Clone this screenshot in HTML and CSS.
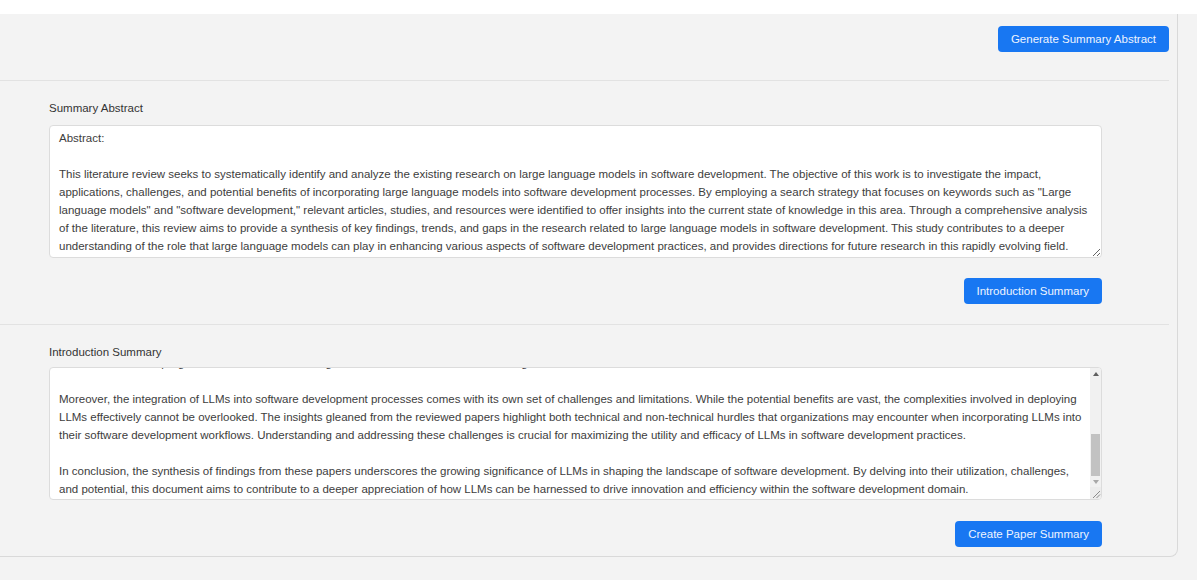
FILE: index.html
```html
<!DOCTYPE html>
<html lang="en">
<head>
<meta charset="utf-8">
<title>Paper Summary</title>
<link rel="stylesheet" href="styles.css">
</head>
<body>
<div class="page">
  <div class="card">
    <div class="card-header">
      <button class="btn" type="button">Generate Summary Abstract</button>
    </div>
    <hr class="sep">
    <div class="section">
      <label class="field-label" for="abstract">Summary Abstract</label>
      <textarea id="abstract" class="field">Abstract:

This literature review seeks to systematically identify and analyze the existing research on large language models in software development. The objective of this work is to investigate the impact, applications, challenges, and potential benefits of incorporating large language models into software development processes. By employing a search strategy that focuses on keywords such as "Large language models" and "software development," relevant articles, studies, and resources were identified to offer insights into the current state of knowledge in this area. Through a comprehensive analysis of the literature, this review aims to provide a synthesis of key findings, trends, and gaps in the research related to large language models in software development. This study contributes to a deeper understanding of the role that large language models can play in enhancing various aspects of software development practices, and provides directions for future research in this rapidly evolving field.</textarea>
      <div class="actions">
        <button class="btn" type="button">Introduction Summary</button>
      </div>
    </div>
    <hr class="sep">
    <div class="section section-last">
      <label class="field-label" for="intro">Introduction Summary</label>
      <div class="field-wrap">
        <textarea id="intro" class="field field-scroll">Introduction:

The rapid advancement of Large Language Models (LLMs) has ushered in a new era of possibilities within the field of software development. This document synthesizes the findings of several research papers that explore the utilization of LLMs across various stages of the software development lifecycle, from requirements engineering and code generation to testing, debugging, and maintenance. By examining these studies collectively, we aim to provide a comprehensive overview of the current state of research and practice, and to identify recurring themes that emerge across the literature.

The reviewed papers highlight a diverse range of applications in which LLMs have demonstrated considerable promise. From automating repetitive coding tasks to assisting developers with documentation and code review, these models have shown the potential to significantly enhance developer productivity and software quality. Several studies also investigate how LLMs can support the education of novice programmers and the onboarding of new team members in software organizations.

Moreover, the integration of LLMs into software development processes comes with its own set of challenges and limitations. While the potential benefits are vast, the complexities involved in deploying LLMs effectively cannot be overlooked. The insights gleaned from the reviewed papers highlight both technical and non-technical hurdles that organizations may encounter when incorporating LLMs into their software development workflows. Understanding and addressing these challenges is crucial for maximizing the utility and efficacy of LLMs in software development practices.

In conclusion, the synthesis of findings from these papers underscores the growing significance of LLMs in shaping the landscape of software development. By delving into their utilization, challenges, and potential, this document aims to contribute to a deeper appreciation of how LLMs can be harnessed to drive innovation and efficiency within the software development domain.</textarea>
        <div class="scrollbar" aria-hidden="true">
          <div class="sb-btn sb-up"></div>
          <div class="sb-track"><div class="sb-thumb"></div></div>
          <div class="sb-btn sb-down"></div>
          <div class="sb-corner">
            <svg width="11" height="12" viewBox="0 0 11 12"><path d="M3 11 L10 4 M6.5 11 L10 7.5" stroke="#8a8a8a" stroke-width="1" fill="none"/></svg>
          </div>
        </div>
      </div>
      <div class="actions">
        <button class="btn" type="button">Create Paper Summary</button>
      </div>
    </div>
  </div>
</div>
<script src="script.js"></script>
</body>
</html>
```

FILE: styles.css
```css
* { box-sizing: border-box; }

html, body {
  margin: 0;
  padding: 0;
  background: #ffffff;
  font-family: "Liberation Sans", Arial, sans-serif;
  color: #333333;
}

.page {
  margin-top: 14px;
  height: 566px;
  background: #f3f3f3;
}

.card {
  width: 1178px;
  border-right: 1px solid #d9d9d9;
  border-bottom: 1px solid #d9d9d9;
  border-bottom-right-radius: 8px;
  padding-bottom: 9px;
}

.card-header {
  display: flex;
  justify-content: flex-end;
  padding: 12px 8px 0 0;
  height: 66px;
}

.sep {
  margin: 0;
  width: 1169px;
  border: 0;
  border-top: 1px solid #e2e2e2;
  height: 0;
}

.section {
  display: flex;
  flex-direction: column;
  padding: 18px 75px 20px 49px;
}

.section-last {
  padding-bottom: 0;
}

.field-label {
  font-size: 11.5px;
  line-height: 18px;
  color: #333333;
  margin-bottom: 8px;
}

.section-last .field-label {
  margin-bottom: 6px;
}

.field {
  display: block;
  width: 1053px;
  height: 133px;
  padding: 3px 9px 2px 9px;
  border: 1px solid #dcdcdc;
  border-radius: 4px;
  background: #ffffff;
  font-family: "Liberation Sans", Arial, sans-serif;
  font-size: 11.5px;
  line-height: 18px;
  color: #3d3d3d;
  resize: vertical;
  outline: none;
}

.field-wrap {
  position: relative;
  width: 1053px;
}

.field-scroll {
  resize: none;
  overflow: hidden;
  padding-right: 14px;
  padding-bottom: 1px;
}

.scrollbar {
  position: absolute;
  top: 1px;
  right: 1px;
  bottom: 1px;
  width: 11px;
  display: flex;
  flex-direction: column;
  background: #f1f1f1;
  border-radius: 0 3px 3px 0;
  overflow: hidden;
}

.sb-btn {
  height: 11px;
  flex: none;
  display: flex;
  align-items: center;
  justify-content: center;
}

.sb-up::before,
.sb-down::before {
  content: "";
  width: 0;
  height: 0;
  border-left: 3px solid transparent;
  border-right: 3px solid transparent;
}

.sb-up::before {
  border-bottom: 4px solid #5f5f5f;
}

.sb-down::before {
  border-top: 4px solid #a8a8a8;
}

.sb-track {
  flex: 1;
  display: flex;
  flex-direction: column;
  justify-content: flex-end;
  padding: 0 1px;
}

.sb-thumb {
  height: 42px;
  background: #c2c2c2;
}

.sb-corner {
  height: 12px;
  flex: none;
  background: #ececec;
}

.sb-corner svg {
  display: block;
}

.actions {
  display: flex;
  justify-content: flex-end;
  margin-top: 20px;
}

.section-last .actions {
  margin-top: 21px;
}

.btn {
  height: 26px;
  padding: 0 13px;
  border: 0;
  border-radius: 4px;
  background: #1877f2;
  color: #eef4ff;
  font-family: "Liberation Sans", Arial, sans-serif;
  font-size: 11.5px;
  line-height: 26px;
  cursor: pointer;
}
```

FILE: script.js
```js
var intro = document.getElementById('intro');
intro.scrollTop = intro.scrollHeight;
```
